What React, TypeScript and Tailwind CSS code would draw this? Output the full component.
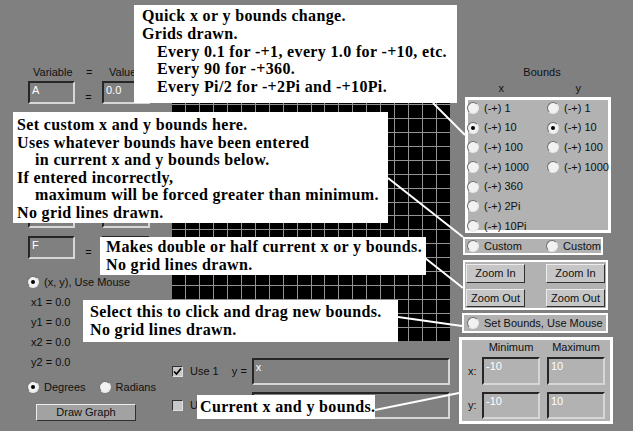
const UI = "font-['Liberation_Sans',Arial,sans-serif] text-[11px] text-[#101010]";
const NOTE = "absolute bg-white font-['Liberation_Serif','Times_New_Roman',serif] font-bold text-[16px] tracking-[0.35px] text-black whitespace-nowrap";

function Radio({ on = false }: { on?: boolean }) {
  return (
    <span className="shrink-0 w-[12px] h-[12px] rounded-full bg-[#f2f2f2] border-[1.5px] border-t-[#6e6e6e] border-l-[#6e6e6e] border-b-[#e6e6e6] border-r-[#e6e6e6] flex items-center justify-center">
      {on && <span className="w-[4px] h-[4px] rounded-full bg-black" />}
    </span>
  );
}

function RadioItem({ label, on = false }: { label: string; on?: boolean }) {
  return (
    <div className="flex items-center gap-[5px] whitespace-nowrap">
      <Radio on={on} />
      <span>{label}</span>
    </div>
  );
}

function Check({ on = false }: { on?: boolean }) {
  return (
    <span className="shrink-0 w-[11px] h-[11px] bg-[#c8c8c8] border border-t-[#303030] border-l-[#303030] border-b-[#e0e0e0] border-r-[#e0e0e0] flex items-center justify-center">
      {on && (
        <svg width="9" height="9" viewBox="0 0 9 9">
          <polyline points="1,4.5 3.5,7 8,1.5" fill="none" stroke="#000" strokeWidth="1.7" />
        </svg>
      )}
    </span>
  );
}

function Field({ value, className = "" }: { value?: string; className?: string }) {
  return (
    <div
      className={
        "h-full border-2 border-t-[#262626] border-l-[#262626] border-b-[#d6d6d6] border-r-[#d6d6d6] text-white pl-[2px] leading-[14px] " +
        className
      }
    >
      {value}
    </div>
  );
}

function Btn({ label, className = "" }: { label: string; className?: string }) {
  return (
    <div
      className={
        "flex items-center justify-center border border-t-[#ececec] border-l-[#ececec] border-b-[#303030] border-r-[#303030] " +
        className
      }
    >
      {label}
    </div>
  );
}

function Grid() {
  const n = 20;
  const s = 278 / n;
  const lines = [];
  for (let i = 1; i < n; i++) {
    lines.push(<line key={"v" + i} x1={i * s} y1={0} x2={i * s} y2={278} />);
    lines.push(<line key={"h" + i} x1={0} y1={i * s} x2={278} y2={i * s} />);
  }
  return (
    <svg width="278" height="278" className="block bg-black">
      <g stroke="#949494" strokeWidth="1" shapeRendering="crispEdges">
        {lines}
      </g>
    </svg>
  );
}

// rows B-E sit under the callout, only their frames peek out
const vars = [
  { v: "A", val: "0.0", eq: true },
  { v: "", val: "", eq: false },
  { v: "", val: "", eq: false },
  { v: "", val: "", eq: false },
  { v: "", val: "", eq: false },
  { v: "F", val: "", eq: true },
];

export default function App() {
  return (
    <div className={"relative w-[633px] h-[431px] overflow-hidden bg-[#808080] flex " + UI}>
      {/* left column */}
      <div className="w-[172px] shrink-0 flex flex-col">
        <div className="mt-[66px] h-[13px] flex pl-[33px] leading-[13px]">
          <span className="w-[53px]">Variable</span>
          <span className="w-[23px]">=</span>
          <span>Value</span>
        </div>
        <div className="mt-[2px] flex flex-col gap-[8px]">
          {vars.map((r, i) => (
            <div key={i} className="h-[23px] flex pl-[28px]">
              <Field value={r.v} className="w-[47px]" />
              <span className="w-[27px] text-center pt-[8px]">{r.eq ? "=" : ""}</span>
              <Field value={r.val} className="w-[48px]" />
            </div>
          ))}
        </div>
        <div className="mt-[13px] h-[20px] flex items-center pl-[27px]">
          <RadioItem label="(x, y), Use Mouse" on />
        </div>
        {["x1 = 0.0", "y1 = 0.0", "x2 = 0.0", "y2 = 0.0"].map((t) => (
          <div key={t} className="h-[20px] flex items-center pl-[31px]">
            {t}
          </div>
        ))}
        <div className="mt-[5px] h-[20px] flex items-center pl-[27px] gap-[13px]">
          <RadioItem label="Degrees" on />
          <RadioItem label="Radians" />
        </div>
        <Btn label="Draw Graph" className="mt-[7px] ml-[36px] w-[100px] h-[17px] bg-[#a2a2a2]" />
      </div>

      {/* middle column */}
      <div className="w-[278px] shrink-0 flex flex-col">
        <div className="mt-[63px]">
          <Grid />
        </div>
        <div className="mt-[17px] h-[27px] flex items-center">
          <Check on />
          <span className="ml-[7px] w-[42px]">Use 1</span>
          <span className="w-[19px]">y =</span>
          <Field value="x" className="w-[199px] ml-[1px]" />
        </div>
        <div className="mt-[7px] h-[27px] flex items-center">
          <Check />
          <span className="ml-[7px] w-[42px]">U</span>
          <span className="w-[19px]" />
          <Field className="w-[199px] ml-[1px]" />
        </div>
      </div>

      {/* right column */}
      <div className="ml-[9px] w-[154px] shrink-0 flex flex-col">
        <div className="mt-[66px] h-[13px] leading-[13px] pl-[12px] text-center">Bounds</div>
        <div className="mt-[3px] h-[13px] leading-[13px] flex">
          <span className="w-[88px] text-center">x</span>
          <span className="w-[72px] text-center">y</span>
        </div>
        <div className="mt-[2px] ml-[6px] w-[146px] h-[136px] border-[3px] border-white bg-[#b2b2b2]">
          <div className="-mt-[2px] -ml-[1px] grid grid-cols-[80px_1fr]">
            {["1", "10", "100", "1000"].map((v) => (
              <div key={v} className="contents">
                <div className="h-[19.7px] flex items-center">
                  <RadioItem label={"(-+) " + v} on={v === "10"} />
                </div>
                <div className="h-[19.7px] flex items-center">
                  <RadioItem label={"(-+) " + v} on={v === "10"} />
                </div>
              </div>
            ))}
            {["360", "2Pi", "10Pi"].map((v) => (
              <div key={v} className="col-span-2 h-[19.7px] flex items-center">
                <RadioItem label={"(-+) " + v} />
              </div>
            ))}
          </div>
        </div>
        <div className="mt-[4px] ml-[4px] w-[140px] h-[18px] border-2 border-white bg-[#b2b2b2] flex items-center pl-[2px]">
          <div className="w-[80px]">
            <RadioItem label="Custom" />
          </div>
          <RadioItem label="Custom" />
        </div>
        <div className="mt-[5px] ml-[4px] w-[145px] h-[50px] border-2 border-white bg-[#b2b2b2] grid grid-cols-[59px_59px] justify-between px-[1px] pt-[2px] gap-y-[6px] content-start">
          <Btn label="Zoom In" className="h-[19px] bg-[#c6c6c6]" />
          <Btn label="Zoom In" className="h-[19px] bg-[#c6c6c6]" />
          <Btn label="Zoom Out" className="h-[18px] bg-[#c6c6c6]" />
          <Btn label="Zoom Out" className="h-[18px] bg-[#c6c6c6]" />
        </div>
        <div className="mt-[3px] ml-[3px] w-[146px] h-[20px] border-2 border-white bg-[#b2b2b2] flex items-center pl-[3px]">
          <RadioItem label="Set Bounds, Use Mouse" />
        </div>
        <div className="mt-[4px] w-[154px] h-[87px] border-[3px] border-white bg-[#b2b2b2] flex flex-col">
          <div className="mt-[1px] h-[13px] leading-[13px] grid grid-cols-[20px_58px_7px_58px]">
            <span />
            <span className="text-center">Minimum</span>
            <span />
            <span className="text-center">Maximum</span>
          </div>
          <div className="mt-[3px] h-[28px] grid grid-cols-[20px_58px_7px_58px]">
            <span className="pl-[6px] flex items-center">x:</span>
            <Field value="-10" />
            <span />
            <Field value="10" />
          </div>
          <div className="mt-[7px] h-[27px] grid grid-cols-[20px_58px_7px_58px]">
            <span className="pl-[6px] flex items-center">y:</span>
            <Field value="-10" />
            <span />
            <Field value="10" />
          </div>
        </div>
      </div>

      {/* callout connectors */}
      <svg className="absolute inset-0 pointer-events-none" width="633" height="431">
        <g stroke="#fff" strokeWidth="2">
          <line x1="433" y1="103" x2="465" y2="135" />
          <line x1="388" y1="178" x2="463" y2="237" />
          <line x1="425" y1="258" x2="463" y2="288" />
          <line x1="398" y1="317" x2="462" y2="326" />
          <line x1="375" y1="410" x2="459" y2="393" />
        </g>
      </svg>

      {/* callouts */}
      <div className={NOTE + " left-[134px] top-[5px] w-[323px] h-[98px] pl-[8px] pt-[2px] leading-[17.8px]"}>
        <div>Quick x or y bounds change.</div>
        <div>Grids drawn.</div>
        <div className="pl-[15px]">Every 0.1 for -+1, every 1.0 for -+10, etc.</div>
        <div className="pl-[15px]">Every 90 for -+360.</div>
        <div className="pl-[15px]">Every Pi/2 for -+2Pi and -+10Pi.</div>
      </div>
      <div className={NOTE + " left-[13px] top-[112px] w-[375px] h-[111px] pl-[4px] pt-[4px] leading-[17.5px]"}>
        <div>Set custom x and y bounds here.</div>
        <div>Uses whatever bounds have been entered</div>
        <div className="pl-[18px]">in current x and y bounds below.</div>
        <div>If entered incorrectly,</div>
        <div className="pl-[18px]">maximum will be forced greater than minimum.</div>
        <div>No grid lines drawn.</div>
      </div>
      <div className={NOTE + " left-[100px] top-[237px] w-[326px] h-[38px] pl-[6px] pt-[1px] leading-[18px]"}>
        <div>Makes double or half current x or y bounds.</div>
        <div>No grid lines drawn.</div>
      </div>
      <div className={NOTE + " left-[83px] top-[300px] w-[315px] h-[42px] pl-[7px] pt-[3px] leading-[18px]"}>
        <div>Select this to click and drag new bounds.</div>
        <div>No grid lines drawn.</div>
      </div>
      <div className={NOTE + " left-[197px] top-[395px] w-[178px] h-[24px] pl-[3px] pt-[3px] leading-[18px]"}>
        <div>Current x and y bounds.</div>
      </div>
    </div>
  );
}
